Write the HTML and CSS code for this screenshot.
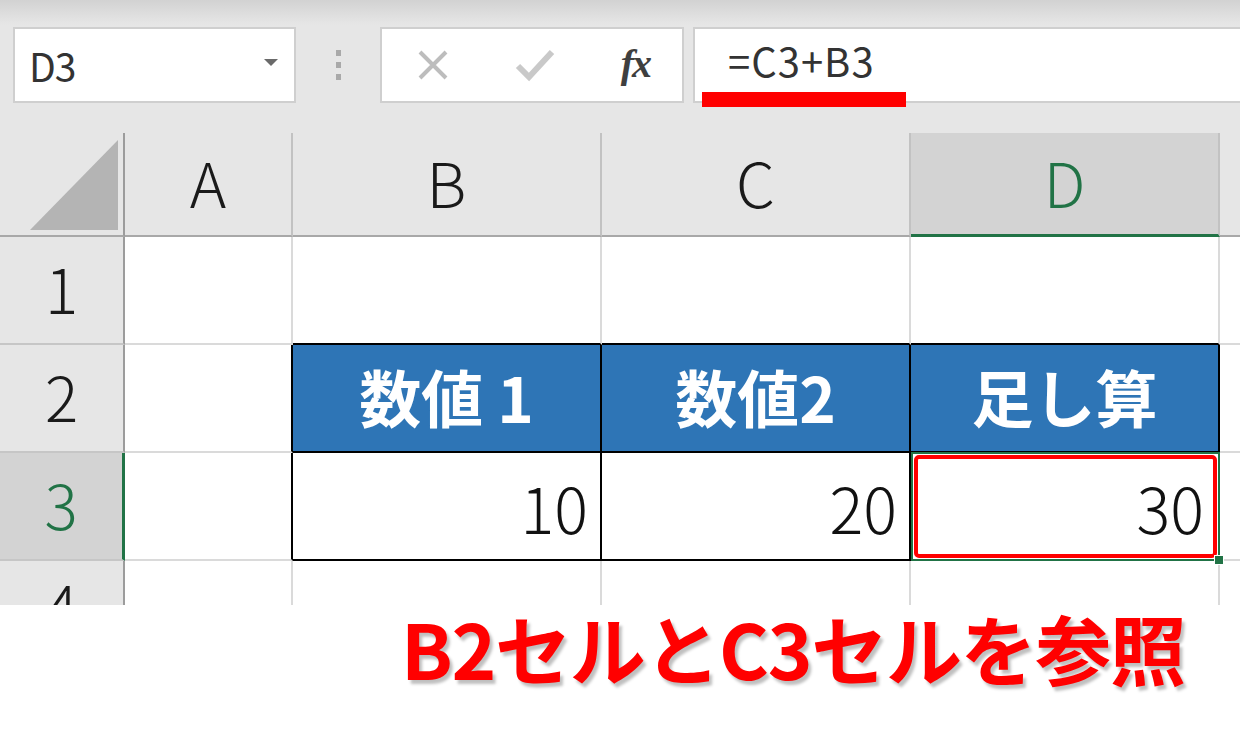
FILE: index.html
```html
<!DOCTYPE html>
<html lang="ja">
<head>
    <meta charset="UTF-8">
    <title>セル参照</title>
    <link rel="stylesheet" href="styles.css">
</head>
<body>
    <div class="toolbar">
        <div class="namebox">
            <span class="name">D3</span>
            <span class="caret"></span>
        </div>
        <div class="grip"><i></i><i></i><i></i></div>
        <div class="fxbox">
            <svg class="icon" width="34" height="34" viewBox="0 0 34 34">
                <path d="M4 4 L30 30 M30 4 L4 30" stroke="#bdbdbd" stroke-width="4" fill="none"/>
            </svg>
            <svg class="icon" width="40" height="34" viewBox="0 0 40 34">
                <path d="M3 18 L14 29 L37 4" stroke="#c9c9c9" stroke-width="6" fill="none"/>
            </svg>
            <span class="fx">fx</span>
        </div>
        <div class="formula">
            <span class="formula-text">=C3+B3</span>
            <span class="underline"></span>
        </div>
    </div>

    <div class="sheet">
        <div class="corner">
            <svg width="125" height="104" viewBox="0 0 125 104">
                <polygon points="30,97 118,7 118,97" fill="#b4b4b4"/>
            </svg>
        </div>
        <div class="colhead">A</div>
        <div class="colhead">B</div>
        <div class="colhead">C</div>
        <div class="colhead active">D</div>
        <div class="colhead rest"></div>

        <div class="rowhead">1</div>
        <div class="cell"></div>
        <div class="cell above"></div>
        <div class="cell above"></div>
        <div class="cell above"></div>
        <div class="cell last"></div>

        <div class="rowhead">2</div>
        <div class="cell left-of"></div>
        <div class="cell tbl head">数値 1</div>
        <div class="cell tbl head">数値2</div>
        <div class="cell tbl head">足し算</div>
        <div class="cell last"></div>

        <div class="rowhead active">3</div>
        <div class="cell left-of"></div>
        <div class="cell tbl num">10</div>
        <div class="cell tbl num">20</div>
        <div class="cell tbl num selected">
            <span class="ring"></span>
            <span>30</span>
            <span class="handle"></span>
        </div>
        <div class="cell last"></div>

        <div class="rowhead cut">4</div>
        <div class="cell cut"></div>
        <div class="cell cut"></div>
        <div class="cell cut"></div>
        <div class="cell cut"></div>
        <div class="cell cut last"></div>
    </div>

    <div class="note">B2セルとC3セルを参照</div>
</body>
</html>
```

FILE: styles.css
```css
body {
    margin: 0;
    width: 1240px;
    height: 744px;
    overflow: hidden;
    background-color: #fff;
    font-family: "Noto Sans CJK JP", "Liberation Sans", sans-serif;
}

/* formula bar */
.toolbar {
    height: 133px;
    box-sizing: border-box;
    padding: 27px 0 0 13px;
    display: flex;
    align-items: flex-start;
    background: linear-gradient(#d2d2d2 0, #e4e4e4 22px, #e6e6e6 26px);
}
.namebox, .fxbox, .formula {
    height: 76px;
    box-sizing: border-box;
    background-color: #fff;
    border: 2px solid #cfcfcf;
    display: flex;
    align-items: center;
}
.namebox {
    width: 283px;
    padding: 0 16px 0 14px;
    justify-content: space-between;
}
.name {
    font-size: 39px;
    color: #333;
    letter-spacing: -1px;
}
.caret {
    width: 0;
    height: 0;
    border-left: 7px solid transparent;
    border-right: 7px solid transparent;
    border-top: 7px solid #6a6a6a;
    margin-top: -6px;
}
.grip {
    width: 84px;
    height: 76px;
    display: flex;
    flex-direction: column;
    align-items: center;
    justify-content: center;
    gap: 6px;
}
.grip i {
    width: 5px;
    height: 6px;
    background-color: #a9a9a9;
}
.fxbox {
    width: 304px;
    padding: 0 32px 0 34px;
    justify-content: space-between;
}
.icon {
    display: block;
}
.fx {
    font-family: "Liberation Serif", serif;
    font-style: italic;
    font-weight: bold;
    font-size: 40px;
    color: #3f3f3f;
    letter-spacing: -2px;
    margin-top: -4px;
}
.formula {
    flex: 1;
    margin-left: 9px;
    border-right: none;
    position: relative;
    padding-left: 33px;
}
.formula-text {
    font-size: 40px;
    color: #333;
    letter-spacing: 1px;
    margin-top: -10px;
}
.underline {
    position: absolute;
    left: 7px;
    top: 63px;
    width: 204px;
    height: 15px;
    background-color: #ff0000;
}

/* grid */
.sheet {
    display: grid;
    grid-template-columns: 125px 168px 309px 309px 309px 20px;
    grid-template-rows: 104px 108px 108px 108px 44px;
    background-color: #e6e6e6;
    font-weight: 300;
}
.corner {
    background-color: #e6e6e6;
    border-right: 2px solid #9c9c9c;
    border-bottom: 2px solid #a8a8a8;
}
.corner svg {
    display: block;
}
.colhead {
    display: flex;
    align-items: center;
    justify-content: center;
    padding-bottom: 6px;
    font-size: 62px;
    color: #1a1a1a;
    background-color: #e6e6e6;
    border-right: 2px solid #c2c2c2;
    border-bottom: 2px solid #a8a8a8;
}
.colhead.active {
    background-color: #d3d3d3;
    color: #217346;
    border-bottom: 3px solid #217346;
}
.colhead.rest {
    border-right: none;
}
.corner, .colhead {
    box-sizing: border-box;
}
.rowhead {
    box-sizing: border-box;
    display: flex;
    align-items: center;
    justify-content: center;
    padding-bottom: 6px;
    font-size: 62px;
    color: #1a1a1a;
    background-color: #e6e6e6;
    border-right: 2px solid #9c9c9c;
    border-bottom: 2px solid #c6c6c6;
}
.rowhead.active {
    background-color: #d3d3d3;
    color: #217346;
    border-right: 3px solid #217346;
}
.cell {
    box-sizing: border-box;
    background-color: #fff;
    border-right: 2px solid #dadada;
    border-bottom: 2px solid #dadada;
}
.cell.last {
    border-right: none;
}
.cell.above {
    border-bottom-color: #000;
}
.cell.left-of {
    border-right-color: #000;
}
.cell.tbl {
    border-right-color: #000;
    border-bottom-color: #000;
    display: flex;
    align-items: center;
}
.tbl.head {
    background-color: #2e75b6;
    color: #fff;
    font-weight: bold;
    font-size: 62px;
    justify-content: center;
    padding-bottom: 4px;
}
.tbl.num {
    justify-content: flex-end;
    padding-right: 12px;
    font-size: 63px;
    color: #111;
}
.cut {
    overflow: hidden;
    align-items: flex-start;
    padding-top: 12px;
    border-bottom: none;
}
.rowhead.cut {
    line-height: 1;
}
.selected {
    position: relative;
    padding-right: 14px !important;
}
.ring {
    position: absolute;
    left: 0;
    top: -1px;
    right: -2px;
    bottom: -2px;
    border: 2px solid #217346;
}
.ring::after {
    content: "";
    position: absolute;
    left: 1px;
    top: 1px;
    right: 1px;
    bottom: 1px;
    border: 4px solid #ff0000;
    border-radius: 5px;
}
.handle {
    position: absolute;
    right: -6px;
    bottom: -6px;
    width: 8px;
    height: 8px;
    background-color: #217346;
    border: 1px solid #fff;
}

/* caption */
.note {
    padding: 4px 0 0 401px;
    font-size: 76px;
    font-weight: bold;
    line-height: 1;
    color: #ff0000;
    text-shadow: 3px 4px 3px rgba(0, 0, 0, 0.25);
    letter-spacing: -1.3px;
}
```
